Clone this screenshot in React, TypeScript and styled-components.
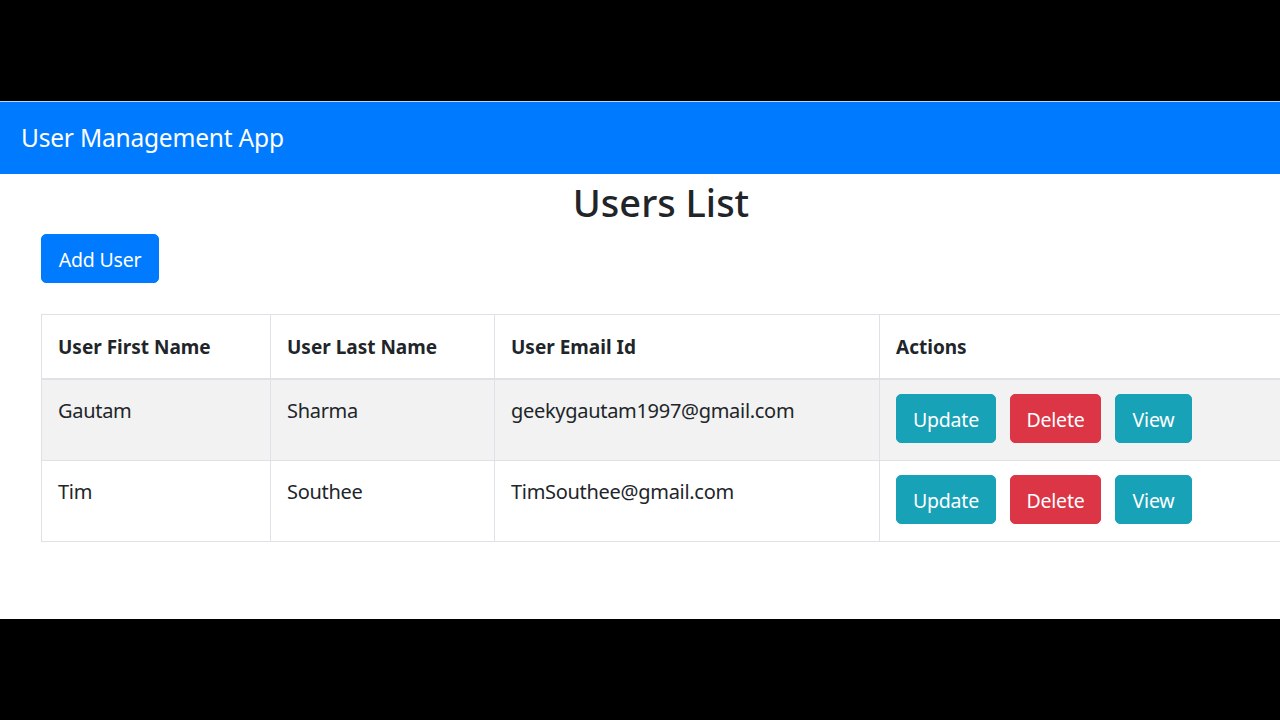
import React from "react";
import styled, { createGlobalStyle } from "styled-components";

const Global = createGlobalStyle`
  html, body { margin: 0; padding: 0; background: #000; }
  body { font-family: "Noto Sans", "Open Sans", sans-serif; color: #212529; overflow: hidden; }
  * { box-sizing: border-box; }
`;

const Screen = styled.div`
  width: 1280px;
  height: 720px;
  display: flex;
  flex-direction: column;
  background: #000;
  overflow: hidden;
`;

const Band = styled.div<{ $h: number }>`
  height: ${(p) => p.$h}px;
  flex: none;
  background: #000;
`;

const Navbar = styled.nav`
  height: 73px;
  flex: none;
  background: #007bff;
  border-top: 1px solid #b9d7f5;
  display: flex;
  align-items: center;
  padding-left: 21px;
  padding-top: 1px;
`;

const Brand = styled.span`
  color: #fff;
  font-size: 24.5px;
  letter-spacing: -0.2px;
  line-height: 1;
`;

const Main = styled.main`
  height: 445px;
  flex: none;
  background: #fff;
  padding-left: 41px;
  overflow: hidden;
`;

const Content = styled.div`
  width: 1240px;
`;

const Title = styled.h2`
  margin: 0;
  text-align: center;
  font-size: 38px;
  font-weight: 500;
  line-height: 56px;
  color: #212529;
`;

const Btn = styled.button<{ $bg: string; $w: number }>`
  font-family: inherit;
  background: ${(p) => p.$bg};
  border: 1px solid ${(p) => p.$bg};
  color: #fff;
  font-size: 19.5px;
  height: 49px;
  width: ${(p) => p.$w}px;
  border-radius: 5px;
  padding: 0;
  display: inline-flex;
  align-items: center;
  justify-content: center;
  letter-spacing: -0.2px;
  padding-top: 2px;
`;

const AddRow = styled.div`
  margin-top: 4px;
  height: 48px;
  display: flex;
`;

const Table = styled.table`
  margin-top: 32px;
  width: 1240px;
  border-collapse: collapse;
  table-layout: fixed;
  font-size: 20px;
`;

const Th = styled.th`
  text-align: left;
  font-weight: 700;
  font-size: 19px;
  border: 1px solid #dee2e6;
  border-bottom: 2px solid #dee2e6;
  padding: 2px 16px 0;
  height: 64px;
  letter-spacing: 0;
`;

const Tr = styled.tr<{ $striped: boolean }>`
  background: ${(p) => (p.$striped ? "#f2f2f2" : "#fff")};
`;

const Td = styled.td`
  border: 1px solid #dee2e6;
  padding: 16px 16px 0;
  vertical-align: top;
  height: 81.5px;
  line-height: 30px;
  letter-spacing: -0.3px;
`;

const ActionCell = styled(Td)`
  padding-top: 14px;
  padding-bottom: 0;
`;

const Actions = styled.div`
  display: flex;
  gap: 14px;
`;

const users = [
  { first: "Gautam", last: "Sharma", email: "geekygautam1997@gmail.com" },
  { first: "Tim", last: "Southee", email: "TimSouthee@gmail.com" },
];

export default function App() {
  return (
    <>
      <Global />
      <Screen>
        <Band $h={101} />
        <Navbar>
          <Brand>User Management App</Brand>
        </Navbar>
        <Main>
          <Content>
            <Title>Users List</Title>
            <AddRow>
              <Btn $bg="#007bff" $w={118}>Add User</Btn>
            </AddRow>
            <Table>
              <colgroup>
                <col style={{ width: 229 }} />
                <col style={{ width: 224 }} />
                <col style={{ width: 385 }} />
                <col style={{ width: 402 }} />
              </colgroup>
              <thead>
                <tr>
                  <Th>User First Name</Th>
                  <Th>User Last Name</Th>
                  <Th>User Email Id</Th>
                  <Th>Actions</Th>
                </tr>
              </thead>
              <tbody>
                {users.map((u, i) => (
                  <Tr key={u.email} $striped={i === 0}>
                    <Td>{u.first}</Td>
                    <Td>{u.last}</Td>
                    <Td>{u.email}</Td>
                    <ActionCell>
                      <Actions>
                        <Btn $bg="#17a2b8" $w={100}>Update</Btn>
                        <Btn $bg="#dc3545" $w={91}>Delete</Btn>
                        <Btn $bg="#17a2b8" $w={77}>View</Btn>
                      </Actions>
                    </ActionCell>
                  </Tr>
                ))}
              </tbody>
            </Table>
          </Content>
        </Main>
        <Band $h={101} />
      </Screen>
    </>
  );
}
